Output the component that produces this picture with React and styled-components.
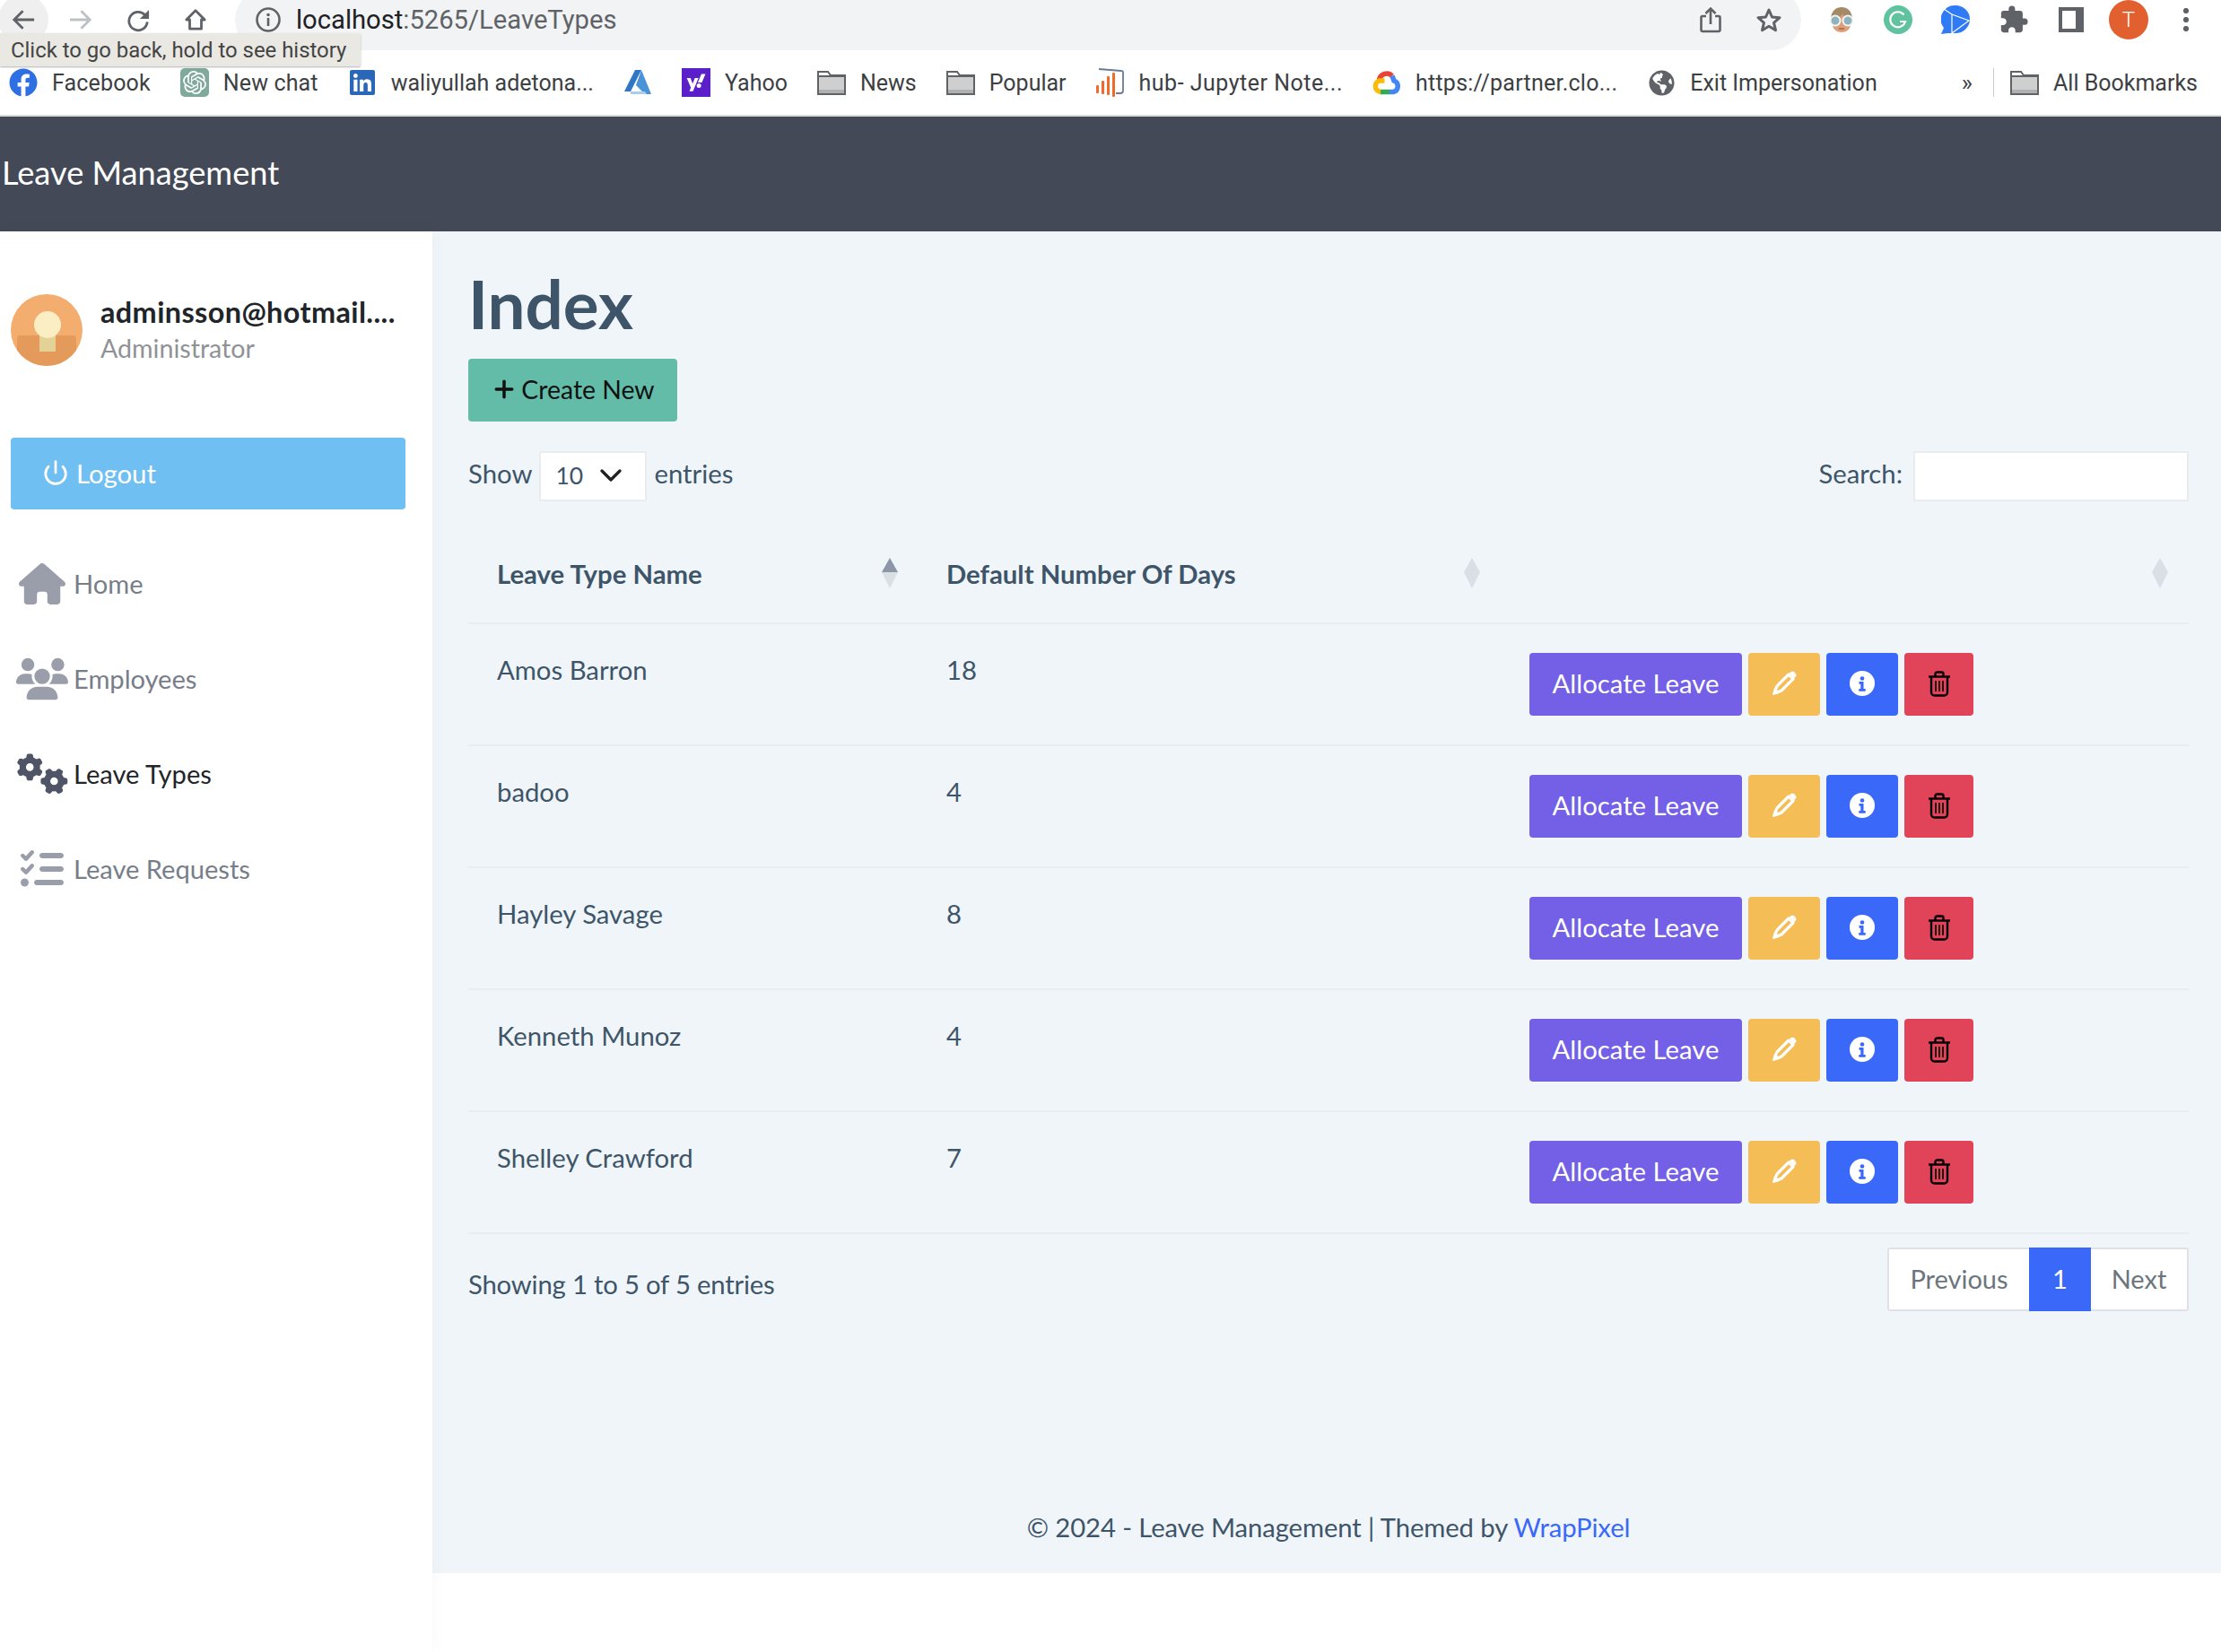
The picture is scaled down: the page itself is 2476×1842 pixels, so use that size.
import React from "react";
import styled, { createGlobalStyle } from "styled-components";
import { FaFacebook, FaLinkedin, FaYahoo, FaGlobeAmericas } from "react-icons/fa";
import { FaHouse, FaUsers, FaGears, FaListCheck } from "react-icons/fa6";
import { MdExtension } from "react-icons/md";
import { SiOpenai } from "react-icons/si";
import { Power, ChevronDown, Plus } from "lucide-react";

const GlobalStyle = createGlobalStyle`
  html, body {
    margin: 0;
    padding: 0;
    background: #fff;
  }
  * {
    box-sizing: border-box;
  }
`;

const Page = styled.div`
  width: 2476px;
  height: 1842px;
  overflow: hidden;
  display: flex;
  flex-direction: column;
  font-family: Lato, "Noto Sans", sans-serif;
  color: #3e5569;
  background: #fff;
`;

/* browser chrome, cropped at the top of the screenshot */
const Toolbar = styled.div`
  height: 68px;
  margin-top: -12px;
  display: flex;
  align-items: center;
  position: relative;
  flex-shrink: 0;
`;

const NavIcons = styled.div`
  width: 262px;
  padding-left: 13px;
  display: flex;
  align-items: center;
  gap: 38px;
`;

const BackCircle = styled.div`
  position: absolute;
  left: -2px;
  top: 6px;
  width: 56px;
  height: 56px;
  border-radius: 50%;
  background: #efefef;
`;

const NavButton = styled.span`
  position: relative;
  width: 26px;
  display: flex;
  justify-content: center;
  color: ${(p) => p.$color || "#5f6368"};
`;

const Omnibox = styled.div`
  width: 1746px;
  height: 68px;
  background: #f1f3f4;
  border-radius: 34px;
  display: flex;
  align-items: center;
  padding: 0 21px 0 23px;
  font-family: Roboto, sans-serif;
  font-size: 29.2px;
  color: #5f6368;
`;

const UrlIcon = styled.svg`
  width: 28px;
  height: 28px;
  margin-right: 17px;
  flex-shrink: 0;
`;

const UrlText = styled.span`
  flex: 1;
  b {
    font-weight: 400;
    color: #202124;
  }
`;

const UrlActions = styled.div`
  display: flex;
  align-items: center;
  gap: 38px;
`;

const Extensions = styled.div`
  flex: 1;
  display: flex;
  align-items: center;
  padding-left: 30px;
  gap: 32px;
  color: #5f6368;
`;

const PuzzleSlot = styled.span`
  display: flex;
  margin: 0 1px 0 0;
`;

const UserBadge = styled.div`
  width: 44px;
  height: 44px;
  border-radius: 50%;
  margin-left: -4px;
  background: #e25f30;
  color: #fff;
  font-family: Roboto, sans-serif;
  font-size: 24px;
  font-weight: 300;
  display: flex;
  align-items: center;
  justify-content: center;
`;

const Dots = styled.div`
  width: 6px;
  height: 30px;
  margin-left: 7px;
  background: radial-gradient(circle, #5f6368 2.8px, transparent 3.3px) 0 0 / 6px 10px;
`;

const Tooltip = styled.div`
  position: absolute;
  left: 0;
  top: 49px;
  width: 402px;
  height: 37px;
  z-index: 5;
  background: #e9e8e3;
  border-radius: 0 2px 2px 0;
  box-shadow: 0 1px 2px rgba(0, 0, 0, 0.3);
  padding-left: 12px;
  font-family: Roboto, sans-serif;
  font-size: 23.9px;
  line-height: 38px;
  color: #444;
  white-space: nowrap;
`;

const BookmarkBar = styled.div`
  height: 74px;
  display: flex;
  align-items: center;
  padding-left: 10px;
  border-bottom: 2px solid #d9dbdd;
  font-family: Roboto, sans-serif;
  font-size: 25px;
  color: #3c4043;
  flex-shrink: 0;
`;

const Bookmark = styled.div`
  display: flex;
  align-items: center;
  gap: 16px;
  margin-right: 33px;
  white-space: nowrap;
  letter-spacing: ${(p) => p.$track || 0}px;
`;

const BookmarkIcon = styled.span`
  width: 32px;
  height: 32px;
  display: flex;
  align-items: center;
  justify-content: center;
  color: ${(p) => p.$color || "#5f6368"};
`;

const YahooTile = styled(BookmarkIcon)`
  background: #5a1fc8;
  color: #fff;
`;

const OpenAiTile = styled(BookmarkIcon)`
  background: #7fa99b;
  border-radius: 5px;
  color: #fff;
`;

const Overflow = styled.div`
  margin-left: auto;
  padding-right: 23px;
  font-size: 26px;
`;

const Divider = styled.div`
  width: 1px;
  height: 32px;
  background: #c7c9cc;
  margin-right: 18px;
`;

const FinalBookmark = styled(Bookmark)`
  margin-right: 26px;
`;

/* app */
const Header = styled.header`
  height: 128px;
  background: #434956;
  color: #fff;
  font-size: 36.2px;
  display: flex;
  align-items: center;
  padding: 0 0 4px 2px;
  flex-shrink: 0;
`;

const Body = styled.div`
  flex: 1;
  display: flex;
  min-height: 0;
`;

const Sidebar = styled.aside`
  width: 482px;
  flex-shrink: 0;
  background: #fff;
  padding: 70px 30px 0 12px;
  box-shadow: 1px 0 18px rgba(0, 0, 0, 0.03);
  position: relative;
`;

const Profile = styled.div`
  display: flex;
  align-items: center;
  gap: 20px;
  height: 80px;
`;

const Avatar = styled.svg`
  width: 80px;
  height: 80px;
  flex-shrink: 0;
`;

const UserName = styled.div`
  font-size: 32.4px;
  font-weight: 700;
  line-height: 40px;
  color: #212529;
  letter-spacing: 0.4px;
`;

const UserRole = styled.div`
  font-size: 28.6px;
  line-height: 40px;
  color: #8f9296;
`;

const LogoutButton = styled.div`
  margin-top: 80px;
  height: 80px;
  background: #6fbff2;
  border-radius: 4px;
  color: #fff;
  font-size: 29.3px;
  display: flex;
  align-items: center;
  gap: 8px;
  padding: 0 0 2px 35px;
`;

const NavList = styled.nav`
  margin-top: 48px;
  display: flex;
  flex-direction: column;
  gap: 37px;
`;

const NavItem = styled.div`
  height: 69px;
  display: flex;
  align-items: center;
  font-size: 29.1px;
  color: ${(p) => (p.$active ? "#212529" : "#777e89")};
`;

const NavGlyph = styled.span`
  width: 70px;
  flex-shrink: 0;
  display: flex;
  justify-content: center;
  color: ${(p) => (p.$active ? "#4f5467" : "#9a9eab")};
`;

const Main = styled.main`
  flex: 1;
  height: 1496px;
  background: #f0f5fa;
  padding: 0 36px 0 40px;
  display: flex;
  flex-direction: column;
`;

const Title = styled.h1`
  margin: 37px 0 0;
  font-size: 74.5px;
  font-weight: 700;
  line-height: 86px;
  color: #3e5569;
`;

const CreateButton = styled.div`
  margin-top: 19px;
  width: 233px;
  height: 70px;
  padding-bottom: 2px;
  background: #63bca8;
  border-radius: 4px;
  color: #111;
  font-size: 28.4px;
  display: flex;
  align-items: center;
  justify-content: center;
  gap: 4px;
`;

const Controls = styled.div`
  margin-top: 33px;
  display: flex;
  justify-content: space-between;
  align-items: center;
  font-size: 29.3px;
`;

const Inline = styled.div`
  display: flex;
  align-items: center;
  gap: 8px;
`;

const ControlLabel = styled.span`
  padding-bottom: 7px;
`;

const PageSize = styled.div`
  width: 120px;
  height: 56px;
  padding: 0 18px 2px 16px;
  background: #fff;
  border: 2px solid #e9ecef;
  border-radius: 2px;
  display: flex;
  align-items: center;
  justify-content: space-between;
  font-size: 26.5px;
`;

const SearchBox = styled.div`
  width: 307px;
  height: 56px;
  background: #fff;
  border: 2px solid #e9ecef;
  margin-left: 4px;
`;

const Table = styled.table`
  width: 1918px;
  border-collapse: collapse;
  table-layout: fixed;
  font-size: 29.3px;
`;

const Th = styled.th`
  position: relative;
  height: 136px;
  padding: 26px 32px 0;
  text-align: left;
  font-weight: 700;
  border-bottom: 2px solid #e9edf2;
`;

const SortArrows = styled.span`
  position: absolute;
  right: ${(p) => p.$right || 23}px;
  top: 63px;
  display: block;
  width: 18px;
  height: 34px;
  &::before,
  &::after {
    content: "";
    position: absolute;
    left: 0;
    border-left: 9px solid transparent;
    border-right: 9px solid transparent;
  }
  &::before {
    top: 0;
    border-bottom: 16px solid ${(p) => (p.$on ? "#8b97a6" : "#d9dfe5")};
  }
  &::after {
    bottom: 0;
    border-top: 18px solid #d9dfe5;
  }
`;

const Td = styled.td`
  height: 136px;
  padding: 31px 32px 0;
  vertical-align: top;
  line-height: 40px;
  border-bottom: 2px solid #e9edf2;
`;

const Actions = styled.div`
  display: flex;
  gap: 7px;
  margin-top: 1px;
`;

const ActionButton = styled.div`
  width: ${(p) => p.$w}px;
  height: 70px;
  border-radius: 4px;
  background: ${(p) => p.$bg};
  color: #fff;
  display: flex;
  align-items: center;
  justify-content: center;
  padding-bottom: 2px;
  font-size: 29.3px;
`;

const TableFoot = styled.div`
  margin-top: 15px;
  display: flex;
  justify-content: space-between;
  align-items: center;
  font-size: 29.3px;
`;

const EntryCount = styled.div`
  margin-top: 10px;
  letter-spacing: -0.2px;
`;

const Pager = styled.div`
  display: flex;
  height: 71px;
  background: #fff;
  border: 2px solid #dee2e6;
  border-radius: 3px;
  font-size: 29px;
  color: #6c757d;
`;

const PagerItem = styled.div`
  width: ${(p) => p.$w}px;
  margin: -2px 0;
  padding-bottom: 2px;
  display: flex;
  align-items: center;
  justify-content: center;
  background: ${(p) => (p.$active ? "#3a68f8" : "transparent")};
  color: ${(p) => (p.$active ? "#fff" : "inherit")};
`;

const Footer = styled.footer`
  margin-top: auto;
  padding-bottom: 33px;
  text-align: center;
  font-size: 29.3px;
  line-height: 36px;
  letter-spacing: -0.12px;
  a {
    color: #3a68f8;
    text-decoration: none;
  }
`;

const rows = [
  ["Amos Barron", 18],
  ["badoo", 4],
  ["Hayley Savage", 8],
  ["Kenneth Munoz", 4],
  ["Shelley Crawford", 7],
];

const BackArrow = () => (
  <svg width="28" height="26" viewBox="0 0 28 26" fill="none" stroke="currentColor" strokeWidth="3">
    <path d="M27 13H3M13.500 2.500 3 13l10.500 10.500" />
  </svg>
);

const ForwardArrow = () => (
  <svg width="28" height="26" viewBox="0 0 28 26" fill="none" stroke="currentColor" strokeWidth="3">
    <path d="M1 13h24M14.500 2.500 25 13 14.500 23.500" />
  </svg>
);

const ReloadIcon = () => (
  <svg width="28" height="27" viewBox="0 0 28 27">
    <path d="M22 7A11 11 0 1 0 25 15.500" fill="none" stroke="currentColor" strokeWidth="3" />
    <path d="M27 1v11H16z" fill="currentColor" />
  </svg>
);

const HomeOutline = () => (
  <svg width="28" height="26" viewBox="0 0 28 26" fill="none" stroke="currentColor" strokeWidth="3" strokeLinejoin="round">
    <path d="M14 2 3 13h4v11h14V13h4z" />
  </svg>
);

const ShareIcon = () => (
  <svg width="24" height="30" viewBox="0 0 24 30" fill="none" stroke="#5f6368" strokeWidth="2.600">
    <path d="M7 11H3a1.500 1.500 0 0 0-1.500 1.500v14A1.500 1.500 0 0 0 3 28h18a1.500 1.500 0 0 0 1.500-1.500v-14A1.500 1.500 0 0 0 21 11h-4" />
    <path d="M12 20V3M6.500 8 12 2.500 17.500 8" />
  </svg>
);

const StarIcon = () => (
  <svg width="30" height="29" viewBox="0 0 30 29" fill="none" stroke="#5f6368" strokeWidth="3" strokeLinejoin="round">
    <path d="m15 3 3.500 8 8.500.7-6.500 5.600 2 8.400L15 21.200l-7.500 4.500 2-8.400L3 11.700l8.500-.7z" />
  </svg>
);

const FolderIcon = () => (
  <svg width="32" height="28" viewBox="0 0 32 28">
    <path d="M1 2h11l3 4h16v21H1z" fill="#fff" stroke="#5f6368" strokeWidth="2" />
    <rect x="2" y="8" width="28" height="18" fill="#cfcfcf" />
    <rect x="1" y="6" width="30" height="2" fill="#5f6368" />
    <rect x="2" y="22" width="28" height="4" fill="#b0b0b0" />
  </svg>
);

const AzureIcon = () => (
  <svg width="32" height="30" viewBox="0 0 32 30">
    <path d="M13 1h7L8 25H1z" fill="#2f77c4" />
    <path d="M20 1l11 27H8l13-3-7-7z" fill="#4a93d8" />
    <path d="M8 25h16l2 3H8z" fill="#a9cdec" />
  </svg>
);

const JupyterIcon = () => (
  <svg width="32" height="34" viewBox="0 0 32 34">
    <path d="M3 2l25 2q2 0 2 2v20q0 3-3 3h-5" fill="none" stroke="#6b7b93" strokeWidth="1.800" />
    <rect x="0" y="20" width="3" height="9" rx="1" fill="#f06a2a" />
    <rect x="6" y="15" width="3" height="15" rx="1" fill="#f06a2a" />
    <rect x="12" y="10" width="3" height="21" rx="1" fill="#f06a2a" />
    <rect x="18" y="6" width="3" height="27" rx="1" fill="#f06a2a" />
  </svg>
);

const CloudIcon = () => (
  <svg width="30" height="28" viewBox="0 0 30 28" fill="none" strokeWidth="5.500">
    <path d="M6.500 12A8.500 8.500 0 0 1 21 6.500" stroke="#ea4335" />
    <path d="M21 6.500 23 12A6.500 6.500 0 0 1 22 24.500h-4" stroke="#4285f4" />
    <path d="M18 24.500H8" stroke="#34a853" />
    <path d="M8 24.500A6.500 6.500 0 0 1 6.500 12h6" stroke="#fbbc05" />
  </svg>
);

const FaceIcon = () => (
  <svg width="30" height="30" viewBox="0 0 30 30">
    <path d="M3 15C3 5 9 1 15 1s12 4 12 14z" fill="#a58a68" />
    <path d="M5 15c3 0 9-2 11-7 1 3 5 6 9 7v5c0 6-5 9-10 9S5 26 5 20z" fill="#dc9f7a" />
    <circle cx="8" cy="16" r="5.500" fill="#8fb2bb" stroke="#eef6f7" strokeWidth="2" />
    <circle cx="22" cy="16" r="5.500" fill="#8fb2bb" stroke="#eef6f7" strokeWidth="2" />
    <path d="M12 25h6" stroke="#a8643f" strokeWidth="1.500" />
  </svg>
);

const GrammarlyIcon = () => (
  <svg width="32" height="32" viewBox="0 0 32 32">
    <circle cx="16" cy="16" r="16" fill="#5fc3a0" />
    <path d="M22.500 10.500A8.500 8.500 0 1 0 24 18h-6" fill="none" stroke="#fff" strokeWidth="2.200" />
  </svg>
);

const PlayBubble = () => (
  <svg width="32" height="32" viewBox="0 0 32 32">
    <path d="M16 0a16 15.500 0 0 1 0 31H7l-7 1 3-7A16 15.500 0 0 1 16 0z" fill="#2f7bf5" />
    <path d="M3 4l9 6v21M12 10l19 7-19 14" fill="none" stroke="#fff" strokeWidth="1.200" />
  </svg>
);

const PanelIcon = () => (
  <svg width="28" height="28" viewBox="0 0 28 28">
    <path d="M0 0h28v28H0z M4 4v20h15V4z" fill="#5f6368" fillRule="evenodd" />
  </svg>
);

const PencilIcon = () => (
  <svg width="28" height="28" viewBox="0 0 28 28">
    <path d="M3 25 6 17 19 4 24 9 11 22z" fill="none" stroke="#fff" strokeWidth="3.200" strokeLinejoin="round" />
    <path d="M1 27l2.200-8.500 6.300 6.300z" fill="#fff" />
    <path d="M20 2.800 21.500 1.300a2.500 2.500 0 0 1 3.500 0l1.700 1.700a2.500 2.500 0 0 1 0 3.500L25.200 8z" fill="#fff" />
  </svg>
);

const InfoDisc = ({ color }) => (
  <svg width="28" height="28" viewBox="0 0 28 28">
    <circle cx="14" cy="14" r="14" fill="#fff" />
    <circle cx="14" cy="8.500" r="2.300" fill={color} />
    <path d="M10.500 12h5v8h2.200v2.700h-7.400V20h2v-5.300h-1.800z" fill={color} />
  </svg>
);

const TrashIcon = () => (
  <svg width="24" height="29" viewBox="0 0 24 29" fill="none" stroke="#000" strokeWidth="2.400">
    <path d="M0 6.500h24" />
    <path d="M7.500 6V3.500A2 2 0 0 1 9.500 1.500h5a2 2 0 0 1 2 2V6" />
    <path d="M3 6.500V24a3.500 3.500 0 0 0 3.500 3.500h11A3.500 3.500 0 0 0 21 24V6.500" />
    <path d="M8 11v12M12 11v12M16 11v12" strokeWidth="1.700" />
  </svg>
);

const ProfilePicture = () => (
  <Avatar viewBox="0 0 80 80">
    <defs>
      <clipPath id="round">
        <circle cx="40" cy="40" r="40" />
      </clipPath>
    </defs>
    <g clipPath="url(#round)">
      <rect width="80" height="80" fill="#f3ad6f" />
      <rect x="7" y="46" width="66" height="34" rx="4" fill="#e39a5b" />
      <rect x="32" y="40" width="18" height="24" fill="#e4d196" />
      <circle cx="41" cy="34" r="15" fill="#fbeec4" />
    </g>
  </Avatar>
);

const sidebarItems = [
  { label: "Home", icon: <FaHouse size={52} /> },
  { label: "Employees", icon: <FaUsers size={58} /> },
  { label: "Leave Types", icon: <FaGears size={57} />, active: true },
  { label: "Leave Requests", icon: <FaListCheck size={48} /> },
];

export default function App() {
  return (
    <Page>
      <GlobalStyle />
      <Toolbar>
        <BackCircle />
        <NavIcons>
          <NavButton><BackArrow /></NavButton>
          <NavButton $color="#bdc1c6"><ForwardArrow /></NavButton>
          <NavButton><ReloadIcon /></NavButton>
          <NavButton><HomeOutline /></NavButton>
        </NavIcons>
        <Omnibox>
          <UrlIcon viewBox="0 0 28 28">
            <circle cx="14" cy="14" r="12.500" fill="none" stroke="#5f6368" strokeWidth="2.600" />
            <circle cx="14" cy="8.500" r="1.800" fill="#5f6368" />
            <rect x="12.700" y="12" width="2.600" height="9" fill="#5f6368" />
          </UrlIcon>
          <UrlText>
            <b>localhost</b>:5265/LeaveTypes
          </UrlText>
          <UrlActions>
            <ShareIcon />
            <StarIcon />
          </UrlActions>
        </Omnibox>
        <Extensions>
          <FaceIcon />
          <GrammarlyIcon />
          <PlayBubble />
          <PuzzleSlot><MdExtension size={34} /></PuzzleSlot>
          <PanelIcon />
          <UserBadge>T</UserBadge>
          <Dots />
        </Extensions>
        <Tooltip>Click to go back, hold to see history</Tooltip>
      </Toolbar>

      <BookmarkBar>
        <Bookmark $track={0.15}>
          <BookmarkIcon $color="#2f6fe4"><FaFacebook size={32} /></BookmarkIcon>
          Facebook
        </Bookmark>
        <Bookmark $track={0.15}>
          <OpenAiTile><SiOpenai size={26} /></OpenAiTile>
          New chat
        </Bookmark>
        <Bookmark>
          <BookmarkIcon $color="#2a67b8"><FaLinkedin size={32} /></BookmarkIcon>
          waliyullah adetona...
        </Bookmark>
        <Bookmark>
          <BookmarkIcon><AzureIcon /></BookmarkIcon>
        </Bookmark>
        <Bookmark>
          <YahooTile><FaYahoo size={22} /></YahooTile>
          Yahoo
        </Bookmark>
        <Bookmark>
          <BookmarkIcon><FolderIcon /></BookmarkIcon>
          News
        </Bookmark>
        <Bookmark>
          <BookmarkIcon><FolderIcon /></BookmarkIcon>
          Popular
        </Bookmark>
        <Bookmark $track={0.5}>
          <BookmarkIcon><JupyterIcon /></BookmarkIcon>
          hub- Jupyter Note...
        </Bookmark>
        <Bookmark $track={0.25}>
          <BookmarkIcon><CloudIcon /></BookmarkIcon>
          https://partner.clo...
        </Bookmark>
        <Bookmark>
          <BookmarkIcon><FaGlobeAmericas size={29} /></BookmarkIcon>
          Exit Impersonation
        </Bookmark>
        <Overflow>»</Overflow>
        <Divider />
        <FinalBookmark>
          <BookmarkIcon><FolderIcon /></BookmarkIcon>
          All Bookmarks
        </FinalBookmark>
      </BookmarkBar>

      <Header>Leave Management</Header>

      <Body>
        <Sidebar>
          <Profile>
            <ProfilePicture />
            <div>
              <UserName>adminsson@hotmail....</UserName>
              <UserRole>Administrator</UserRole>
            </div>
          </Profile>
          <LogoutButton>
            <Power size={30} strokeWidth={2.2} />
            Logout
          </LogoutButton>
          <NavList>
            {sidebarItems.map((item) => (
              <NavItem key={item.label} $active={item.active}>
                <NavGlyph $active={item.active}>{item.icon}</NavGlyph>
                {item.label}
              </NavItem>
            ))}
          </NavList>
        </Sidebar>

        <Main>
          <Title>Index</Title>
          <CreateButton>
            <Plus size={30} strokeWidth={2.8} />
            Create New
          </CreateButton>
          <Controls>
            <Inline>
              <ControlLabel>Show</ControlLabel>
              <PageSize>
                10
                <ChevronDown size={40} strokeWidth={2} color="#222" />
              </PageSize>
              <ControlLabel>entries</ControlLabel>
            </Inline>
            <Inline>
              <ControlLabel>Search:</ControlLabel>
              <SearchBox />
            </Inline>
          </Controls>
          <Table>
            <colgroup>
              <col width="501" />
              <col width="650" />
              <col width="767" />
            </colgroup>
            <thead>
              <tr>
                <Th>Leave Type Name<SortArrows $on $right={22} /></Th>
                <Th>Default Number Of Days<SortArrows /></Th>
                <Th><SortArrows /></Th>
              </tr>
            </thead>
            <tbody>
              {rows.map(([name, days]) => (
                <tr key={name}>
                  <Td>{name}</Td>
                  <Td>{days}</Td>
                  <Td>
                    <Actions>
                      <ActionButton $w={237} $bg="#7460e6">Allocate Leave</ActionButton>
                      <ActionButton $w={80} $bg="#f5bd55"><PencilIcon /></ActionButton>
                      <ActionButton $w={80} $bg="#3a68f8"><InfoDisc color="#3a68f8" /></ActionButton>
                      <ActionButton $w={77} $bg="#e14358"><TrashIcon /></ActionButton>
                    </Actions>
                  </Td>
                </tr>
              ))}
            </tbody>
          </Table>
          <TableFoot>
            <EntryCount>Showing 1 to 5 of 5 entries</EntryCount>
            <Pager>
              <PagerItem $w={156}>Previous</PagerItem>
              <PagerItem $w={69} $active>1</PagerItem>
              <PagerItem $w={107}>Next</PagerItem>
            </Pager>
          </TableFoot>
          <Footer>
            © 2024 - Leave Management | Themed by <a href="#wrappixel">WrapPixel</a>
          </Footer>
        </Main>
      </Body>
    </Page>
  );
}
